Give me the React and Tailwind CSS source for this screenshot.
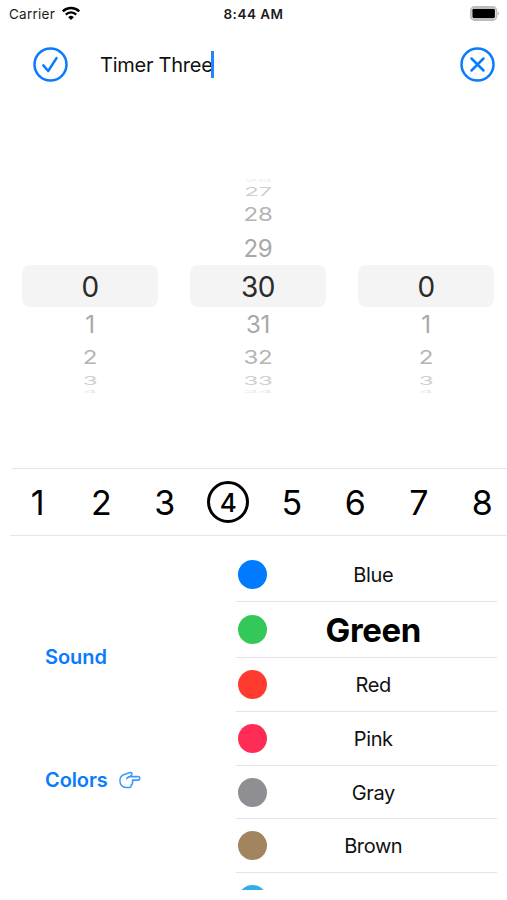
import { useState } from 'react';
import clsx from 'clsx';

const WHEELS = [
  { name: 'hours', value: 0, min: 0 },
  { name: 'minutes', value: 30, min: 0 },
  { name: 'seconds', value: 0, min: 0 },
];

// Rows of a wheel, from the top edge to the bottom edge
const WHEEL_ROWS = [
  { offset: -4, row: 'h-[7px] overflow-hidden', text: 'scale-y-[0.16] text-[#ececec]' },
  { offset: -3, row: 'h-[15px]', text: 'scale-y-50 text-[#cfcfcf]' },
  { offset: -2, row: 'h-8', text: 'scale-y-[0.8] text-[#b4b4b4]' },
  { offset: -1, row: 'h-[34px] pt-px', text: 'text-[#a8a8a8]' },
  { offset: 0, row: 'h-[42px] rounded-lg bg-[#f4f4f4] pt-px', text: 'text-[#2b2b2b]' },
  { offset: 1, row: 'h-[34px] pt-0.5', text: 'text-[#a8a8a8]' },
  { offset: 2, row: 'h-8 pt-0.5', text: 'scale-y-[0.8] text-[#b4b4b4]' },
  { offset: 3, row: 'h-[15px]', text: 'scale-y-50 text-[#cfcfcf]' },
  { offset: 4, row: 'h-[7px] overflow-hidden', text: 'scale-y-[0.16] text-[#e6e6e6]' },
];

const COLORS = [
  { name: 'Blue', dot: 'bg-[#007aff]', row: 'h-[55px]' },
  { name: 'Green', dot: 'bg-[#34c759]', row: 'h-14' },
  { name: 'Red', dot: 'bg-[#ff3b30]', row: 'h-[54px]' },
  { name: 'Pink', dot: 'bg-[#ff2d55]', row: 'h-[54px]' },
  { name: 'Gray', dot: 'bg-[#8e8e93]', row: 'h-[53px]' },
  { name: 'Brown', dot: 'bg-[#a2845e]', row: 'h-[54px]' },
];

const StatusBar = () => (
  <div className="grid h-7 grid-cols-3 items-center px-[9px] text-[13.5px] text-[#1c1c1c]">
    <div className="flex items-center gap-[7px]">
      <span className="tracking-[0.25px]">Carrier</span>
      <svg viewBox="0 0 18 14" className="mb-0.5 h-3.5 w-[18px] overflow-visible" fill="none">
        <path d="M.8 5.4a11.6 11.6 0 0 1 16.4 0" stroke="#000" strokeWidth="2.5" />
        <path d="M3.8 8.6a7.3 7.3 0 0 1 10.4 0" stroke="#000" strokeWidth="2.3" />
        <path d="M9 14 6.2 11.2a4 4 0 0 1 5.6 0z" fill="#000" />
      </svg>
    </div>
    <span className="text-center font-semibold tracking-[0.5px] whitespace-nowrap">
      8:44 AM
    </span>
    <svg viewBox="0 0 31 15" className="mb-0.5 h-[15px] w-[31px] justify-self-end overflow-visible" fill="none">
      <rect x="3.9" y="1" width="25.5" height="13" rx="3.6" fill="#fff" stroke="#bcbcbc" strokeWidth="1.8" />
      <rect x="5.4" y="2.8" width="22.5" height="9.4" rx="1.4" fill="#000" />
      <path d="M30.7 5.4c1.8.8 1.8 3.4 0 4.2z" fill="#bcbcbc" />
    </svg>
  </div>
);

const CircleButton = ({ label, children }) => (
  <button aria-label={label} className="size-[35px]">
    <svg
      viewBox="0 0 35 35"
      className="size-full"
      fill="none"
      stroke="#0a7aff"
      strokeWidth="2.5"
      strokeLinecap="round"
      strokeLinejoin="round"
    >
      <circle cx="17.5" cy="17.5" r="16" />
      {children}
    </svg>
  </button>
);

const Wheel = ({ value, min }) => (
  <div className="flex w-[136px] flex-col">
    {WHEEL_ROWS.map(({ offset, row, text }) => (
      <div key={offset} className={clsx('flex items-center justify-center', row)}>
        {value + offset >= min && (
          <span
            className={clsx(
              'leading-none',
              offset === 0 ? 'text-[28px] tracking-[-0.6px]' : 'text-2xl tracking-[-0.3px]',
              text
            )}
          >
            {value + offset}
          </span>
        )}
      </div>
    ))}
  </div>
);

const App = () => {
  const [title, setTitle] = useState('Timer Three');
  const [slot, setSlot] = useState(4);
  const [color, setColor] = useState('Green');

  return (
    <div className="flex h-[900px] w-[507px] flex-col overflow-hidden bg-white font-[Inter,sans-serif] text-[#111]">
      <StatusBar />

      <header className="mt-[19px] flex items-center pr-[12.5px] pl-[32.5px]">
        <CircleButton label="Save">
          <path d="m10.3 18.4 4.9 5.6 8.3-12.9" />
        </CircleButton>
        <div className="ml-[32.5px] flex flex-1 items-center">
          <span className="text-xl tracking-[-0.25px]" onClick={() => setTitle('')}>
            {title}
          </span>
          <span className="-ml-[1.5px] h-[27px] w-[3px] bg-[#2484fb]" />
        </div>
        <CircleButton label="Cancel">
          <path d="m11.5 11.5 12 12M23.5 11.5l-12 12" />
        </CircleButton>
      </header>

      {/* Hours, minutes, seconds */}
      <div className="mt-[95px] flex gap-8 pl-[22px]">
        {WHEELS.map((wheel) => (
          <Wheel key={wheel.name} value={wheel.value} min={wheel.min} />
        ))}
      </div>

      {/* Timer slots */}
      <div className="mt-[73px] ml-3 h-px shrink-0 bg-[#e6e6e6]" />
      <div className="ml-1.5 grid h-[66px] w-[508px] shrink-0 grid-cols-8">
        {[1, 2, 3, 4, 5, 6, 7, 8].map((n) => (
          <button
            key={n}
            onClick={() => setSlot(n)}
            className="flex items-center justify-center text-[34px] text-black"
          >
            {n === slot ? (
              <span className="flex size-[42px] items-center justify-center rounded-full border-[3px] border-black text-[26px] font-medium">
                {n}
              </span>
            ) : (
              n
            )}
          </button>
        ))}
      </div>
      <div className="ml-2.5 h-px shrink-0 bg-[#e6e6e6]" />

      <div className="mt-[11px] flex h-[343px] shrink-0">
        <nav className="flex w-[236px] flex-col items-start pt-[96px] pl-[45px] text-xl font-semibold text-[#0a7aff]">
          <button className="h-7 tracking-[-0.05px]">Sound</button>
          <button className="mt-[95px] flex h-7 items-center gap-[11px] tracking-[-0.1px]">
            Colors
            <svg
              viewBox="0 0 24 18"
              className="h-[18px] w-[22px]"
              preserveAspectRatio="none"
              fill="none"
              stroke="#3d95ff"
              strokeWidth="1.6"
              strokeLinejoin="round"
              strokeLinecap="round"
            >
              <path d="M12 5.6h9a1.7 1.7 0 0 1 0 3.5h-6.5M8.5 7.6c1-1.3 2.2-2 3.5-2l1.8-1.9c1-1.3 0-2.6-1.7-2.1L5.8 3.4C2.8 4.4 1 6.6 1 9.5c0 4 2.7 7 6.5 7h3.7c1.9 0 2.6-1.4 2-2.6 1.4-.4 1.9-1.6 1.3-2.6.8-.5.9-1.5.3-2.2" />
            </svg>
          </button>
        </nav>

        <div className="w-[261px] overflow-hidden">
          {COLORS.map(({ name, dot, row }) => (
            <button
              key={name}
              onClick={() => setColor(name)}
              className={clsx(
                'flex w-full items-center border-b border-[#e4e4e6] pl-[1.5px]',
                row
              )}
            >
              <span className={clsx('size-[29px] shrink-0 rounded-full', dot)} />
              <span
                className={clsx(
                  'flex-1 pt-px pr-[17px]',
                  name === color
                    ? 'text-[33px] leading-none font-bold tracking-[-0.4px] text-black'
                    : 'text-xl tracking-[-0.4px]'
                )}
              >
                {name}
              </span>
            </button>
          ))}
          {/* Next color, peeking in from below */}
          <button
            aria-label="Cyan"
            onClick={() => setColor('Cyan')}
            className="flex h-[52px] items-center pl-[1.5px]"
          >
            <span className="size-[29px] rounded-full bg-[#32ade6]" />
          </button>
        </div>
      </div>
    </div>
  );
};

export default App;
